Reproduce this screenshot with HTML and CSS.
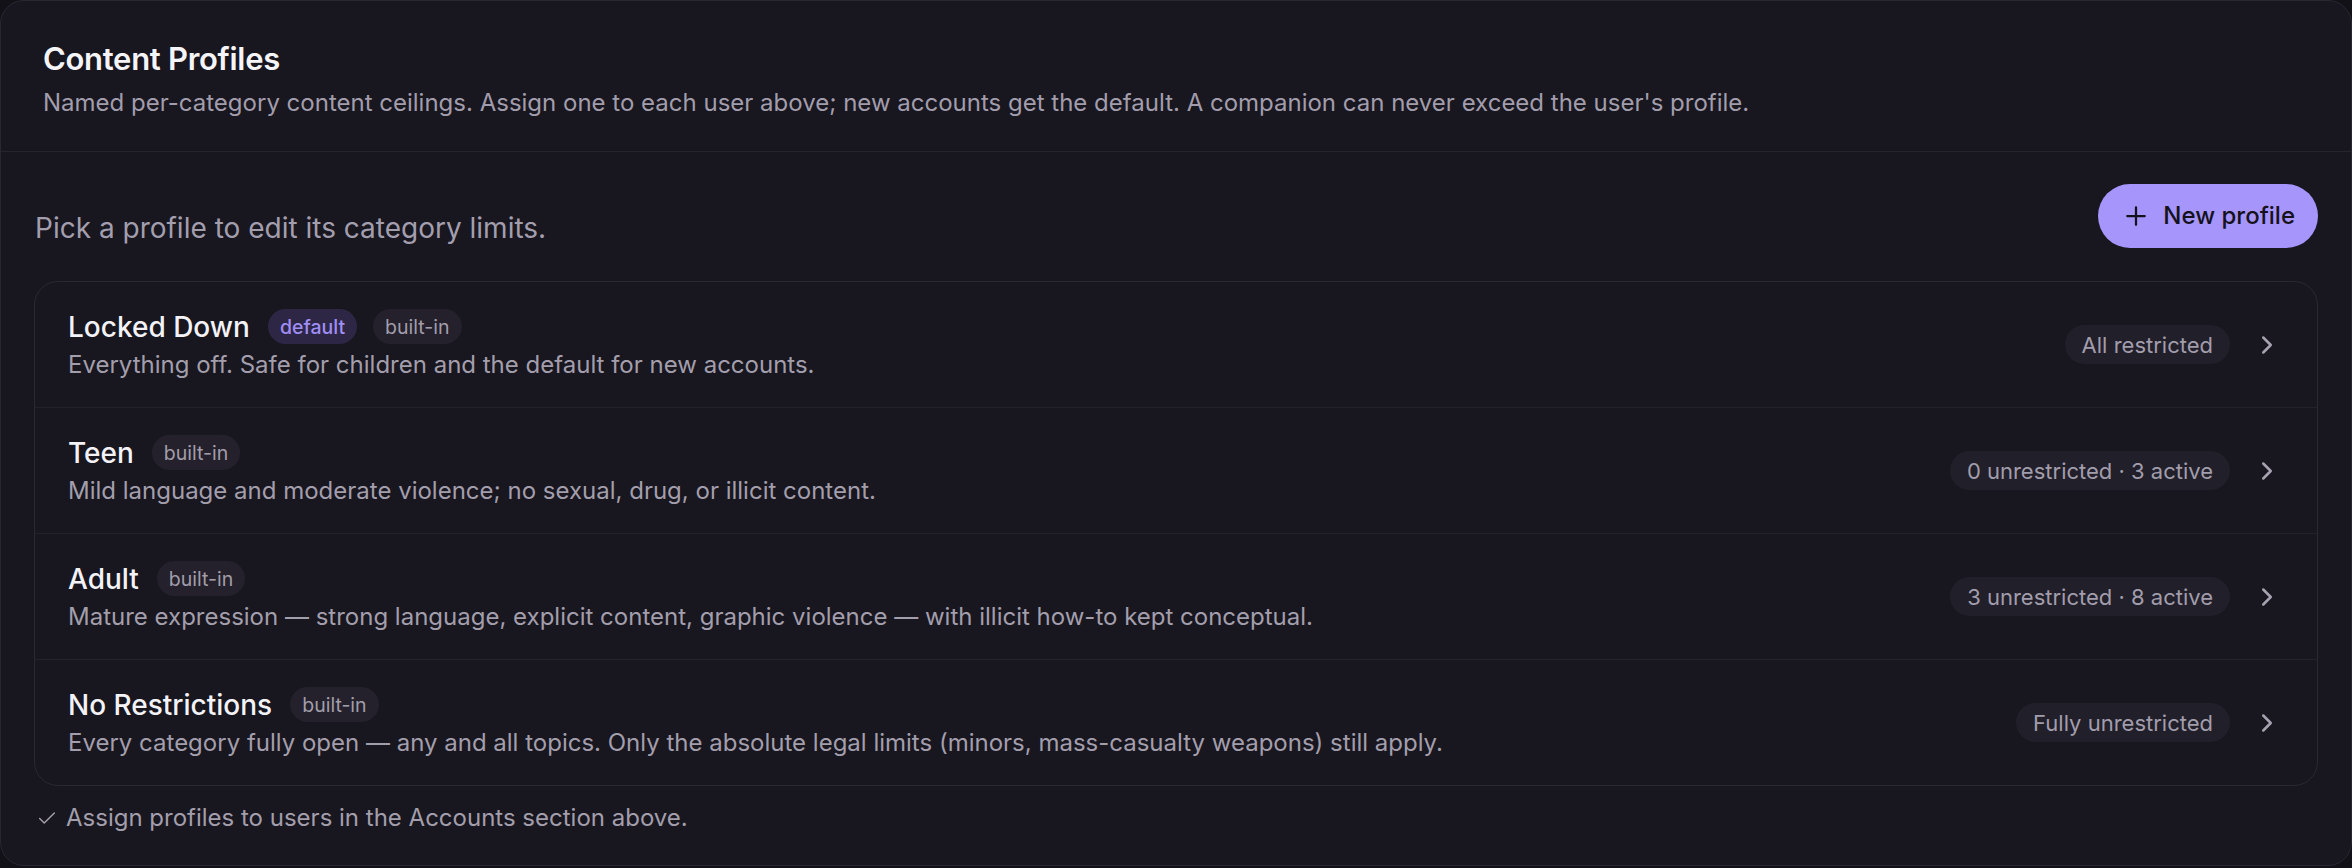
FILE: index.html
```html
<!DOCTYPE html>
<html lang="en">
<head>
<meta charset="utf-8">
<title>Content Profiles</title>
<link rel="stylesheet" href="styles.css">
</head>
<body>
<section class="panel">
  <header class="panel-head">
    <h2 class="panel-title">Content Profiles</h2>
    <p class="panel-sub">Named per-category content ceilings. Assign one to each user above; new accounts get the default. A companion can never exceed the user's profile.</p>
  </header>
  <div class="panel-body">
    <div class="toolbar">
      <p class="hint">Pick a profile to edit its category limits.</p>
      <button class="btn-primary" type="button">
        <svg class="ico" viewBox="0 0 24 24" fill="none" stroke="currentColor" stroke-width="1.8" stroke-linecap="round"><path d="M12 5v14M5 12h14"/></svg>
        <span>New profile</span>
      </button>
    </div>
    <ul class="profiles">
      <li class="profile">
        <div class="profile-main">
          <div class="profile-name-row">
            <span class="profile-name">Locked Down</span>
            <span class="tag tag-accent">default</span>
            <span class="tag">built-in</span>
          </div>
          <p class="profile-desc">Everything off. Safe for children and the default for new accounts.</p>
        </div>
        <span class="summary">All restricted</span>
        <svg class="chev" viewBox="0 0 24 24" fill="none" stroke="currentColor" stroke-width="2" stroke-linecap="round" stroke-linejoin="round"><path d="m9 18 6-6-6-6"/></svg>
      </li>
      <li class="profile">
        <div class="profile-main">
          <div class="profile-name-row">
            <span class="profile-name">Teen</span>
            <span class="tag">built-in</span>
          </div>
          <p class="profile-desc">Mild language and moderate violence; no sexual, drug, or illicit content.</p>
        </div>
        <span class="summary">0 unrestricted · 3 active</span>
        <svg class="chev" viewBox="0 0 24 24" fill="none" stroke="currentColor" stroke-width="2" stroke-linecap="round" stroke-linejoin="round"><path d="m9 18 6-6-6-6"/></svg>
      </li>
      <li class="profile">
        <div class="profile-main">
          <div class="profile-name-row">
            <span class="profile-name">Adult</span>
            <span class="tag">built-in</span>
          </div>
          <p class="profile-desc">Mature expression — strong language, explicit content, graphic violence — with illicit how-to kept conceptual.</p>
        </div>
        <span class="summary">3 unrestricted · 8 active</span>
        <svg class="chev" viewBox="0 0 24 24" fill="none" stroke="currentColor" stroke-width="2" stroke-linecap="round" stroke-linejoin="round"><path d="m9 18 6-6-6-6"/></svg>
      </li>
      <li class="profile">
        <div class="profile-main">
          <div class="profile-name-row">
            <span class="profile-name">No Restrictions</span>
            <span class="tag">built-in</span>
          </div>
          <p class="profile-desc">Every category fully open — any and all topics. Only the absolute legal limits (minors, mass-casualty weapons) still apply.</p>
        </div>
        <span class="summary">Fully unrestricted</span>
        <svg class="chev" viewBox="0 0 24 24" fill="none" stroke="currentColor" stroke-width="2" stroke-linecap="round" stroke-linejoin="round"><path d="m9 18 6-6-6-6"/></svg>
      </li>
    </ul>
    <p class="footnote">
      <svg class="check" viewBox="0 0 24 24" fill="none" stroke="currentColor" stroke-width="1.6" stroke-linecap="round" stroke-linejoin="round"><path d="M4 12.5l5 5L20 6.5"/></svg>
      <span>Assign profiles to users in the Accounts section above.</span>
    </p>
  </div>
</section>
</body>
</html>
```
FILE: styles.css
```css
* { box-sizing: border-box; }
html, body { margin: 0; padding: 0; }
body {
  background: #121117;
  font-family: Inter, "Noto Sans", "Liberation Sans", sans-serif;
  color: #f2f1f6;
  width: 2352px;
  height: 868px;
}
.panel {
  height: 866px;
  background: #18161f;
  border: 1.5px solid #2a2733;
  border-radius: 24px;
  overflow: hidden;
}
.panel-head {
  padding: 40px 42px 32px;
  border-bottom: 1.5px solid #272430;
}
.panel-title {
  margin: 0;
  font-size: 31px;
  line-height: 36px;
  font-weight: 600;
  letter-spacing: -0.3px;
  color: #f5f4f9;
}
.panel-sub {
  margin: 10px 0 0;
  font-size: 24px;
  line-height: 32px;
  color: #a29dac;
}
.panel-body {
  padding: 31.5px 33px 0 33px;
}
.toolbar {
  display: flex;
  justify-content: space-between;
  align-items: flex-end;
}
.hint {
  margin: 0 0 2px 1px;
  font-size: 28px;
  line-height: 36px;
  color: #a39eae;
}
.btn-primary {
  display: flex;
  align-items: center;
  gap: 12px;
  height: 64px;
  padding: 0 23px 0 23px;
  border: 0;
  border-radius: 32px;
  background: #a695fb;
  color: #15121c;
  font-family: inherit;
  font-size: 24px;
  font-weight: 500;
}
.btn-primary .ico { width: 30px; height: 30px; }
.profiles {
  list-style: none;
  margin: 33px 0 0;
  padding: 0;
  border: 1.5px solid #2b2834;
  border-radius: 24px;
}
.profile {
  display: flex;
  align-items: center;
  gap: 22px;
  padding: 27px 35px 26px 33px;
  border-bottom: 1px solid #24212b;
}
.profile:last-child { border-bottom: 0; }
.profile-main { flex: 1; min-width: 0; }
.profile-name-row {
  display: flex;
  align-items: center;
  gap: 16px;
  height: 36px;
}
.profile-name {
  font-size: 28px;
  font-weight: 500;
  color: #f3f2f7;
  margin-right: 2px;
}
.tag {
  display: inline-flex;
  align-items: center;
  height: 35px;
  padding: 0 12px;
  border-radius: 18px;
  background: #24212c;
  color: #a29dab;
  font-size: 19.5px;
}
.tag-accent {
  background: #2d2745;
  color: #a08df4;
  font-weight: 500;
}
.profile-desc {
  margin: 4px 0 0;
  font-size: 24px;
  line-height: 32px;
  color: #a39eac;
}
.summary {
  display: inline-flex;
  align-items: center;
  height: 39px;
  padding: 0 17px;
  border-radius: 20px;
  background: #211f29;
  color: #a29dac;
  font-size: 22px;
  white-space: nowrap;
}
.chev {
  width: 30px;
  height: 30px;
  color: #a7a2b0;
  flex: none;
}
.footnote {
  display: flex;
  align-items: center;
  gap: 8px;
  margin: 16px 0 0 2px;
  font-size: 24px;
  line-height: 32px;
  color: #a39eac;
}
.footnote .check { width: 22px; height: 22px; color: #a39eac; }
```
